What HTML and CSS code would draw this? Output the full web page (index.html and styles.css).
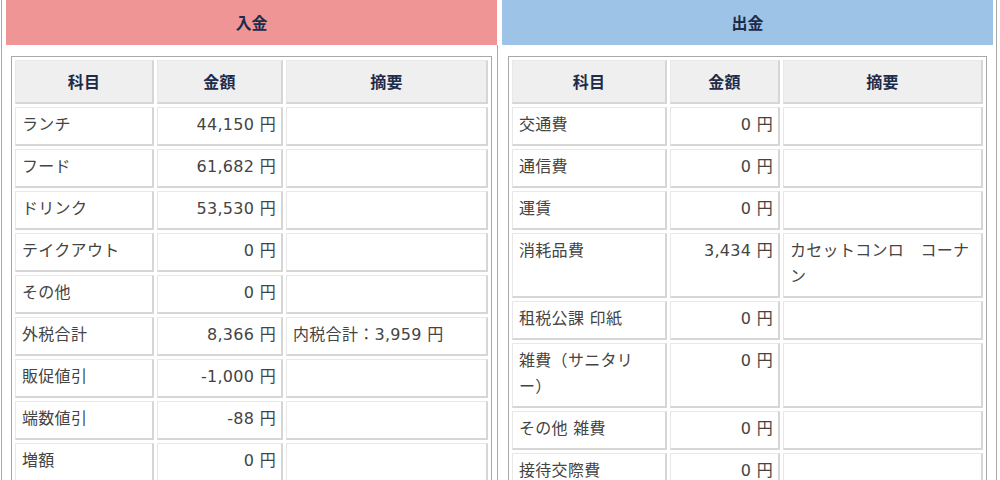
FILE: index.html
```html
<!DOCTYPE html>
<html lang="ja">
<head>
<meta charset="utf-8">
<title>入出金</title>
<link rel="stylesheet" href="styles.css">
</head>
<body>
<div class="page">
  <section class="col col-in">
    <h2 class="col-title title-in">入金</h2>
    <div class="col-body">
      <table class="ledger ledger-in">
        <colgroup><col class="c1"><col class="c2"><col class="c3"></colgroup>
        <thead>
          <tr><th>科目</th><th>金額</th><th>摘要</th></tr>
        </thead>
        <tbody>
          <tr><td>ランチ</td><td class="amt">44,150 円</td><td></td></tr>
          <tr><td>フード</td><td class="amt">61,682 円</td><td></td></tr>
          <tr><td>ドリンク</td><td class="amt">53,530 円</td><td></td></tr>
          <tr><td>テイクアウト</td><td class="amt">0 円</td><td></td></tr>
          <tr><td>その他</td><td class="amt">0 円</td><td></td></tr>
          <tr><td>外税合計</td><td class="amt">8,366 円</td><td>内税合計：3,959 円</td></tr>
          <tr><td>販促値引</td><td class="amt">-1,000 円</td><td></td></tr>
          <tr><td>端数値引</td><td class="amt">-88 円</td><td></td></tr>
          <tr><td>増額</td><td class="amt">0 円</td><td></td></tr>
        </tbody>
      </table>
    </div>
  </section>
  <section class="col col-out">
    <h2 class="col-title title-out">出金</h2>
    <div class="col-body">
      <table class="ledger ledger-out">
        <colgroup><col class="c1"><col class="c2"><col class="c3"></colgroup>
        <thead>
          <tr><th>科目</th><th>金額</th><th>摘要</th></tr>
        </thead>
        <tbody>
          <tr><td>交通費</td><td class="amt">0 円</td><td></td></tr>
          <tr><td>通信費</td><td class="amt">0 円</td><td></td></tr>
          <tr><td>運賃</td><td class="amt">0 円</td><td></td></tr>
          <tr><td>消耗品費</td><td class="amt">3,434 円</td><td>カセットコンロ　コーナン</td></tr>
          <tr><td>租税公課 印紙</td><td class="amt">0 円</td><td></td></tr>
          <tr><td>雑費（サニタリー）</td><td class="amt">0 円</td><td></td></tr>
          <tr><td>その他 雑費</td><td class="amt">0 円</td><td></td></tr>
          <tr><td>接待交際費</td><td class="amt">0 円</td><td></td></tr>
        </tbody>
      </table>
    </div>
  </section>
</div>
</body>
</html>
```
FILE: styles.css
```css
* { box-sizing: border-box; }

html, body {
  margin: 0;
  padding: 0;
  background: #ffffff;
}

body {
  font-family: "DejaVu Sans", "Noto Sans CJK JP", sans-serif;
  font-size: 16px;
  color: #444444;
}

.page {
  display: flex;
  margin-left: 1px;
  width: 996px;
  border-left: 1px solid #aaaaaa;
  border-right: 1px solid #aaaaaa;
}

.col {
  display: flex;
  flex-direction: column;
}

.col-in {
  width: 496px;
}

.col-out {
  width: 498px;
}

.col-title {
  margin: 0 0 0 4px;
  width: 491px;
  height: 45px;
  line-height: 45px;
  text-align: center;
  font-family: "Noto Sans CJK JP", sans-serif;
  font-size: 16px;
  font-weight: bold;
  color: #1e2b4a;
}

.title-in { background: #ef9595; }
.title-out { background: #9dc3e6; }

.col-body {
  flex: 1;
  padding-top: 11px;
}

.col-in .col-body {
  padding-left: 9px;
  border-right: 1px solid #aaaaaa;
}

.col-out .col-body {
  padding-left: 10px;
}

.ledger {
  border-collapse: separate;
  border-spacing: 3px;
  border: 1px solid #a8a8a8;
  table-layout: fixed;
}

.ledger-in { width: 481px; }
.ledger-in .c1 { width: 139px; }
.ledger-in .c2 { width: 126px; }
.ledger-in .c3 { width: 202px; }

.ledger-out { width: 479px; }
.ledger-out .c1 { width: 155px; }
.ledger-out .c2 { width: 110px; }
.ledger-out .c3 { width: 200px; }

.ledger th,
.ledger td {
  border-top: 1px solid #e8e8e8;
  border-left: 1px solid #e8e8e8;
  border-right: 2px solid #d6d6d6;
  border-bottom: 2px solid #d6d6d6;
  line-height: 26px;
  vertical-align: top;
  letter-spacing: 0.3px;
  text-spacing-trim: space-all;
}

.ledger th {
  background: #efefef;
  height: 44px;
  padding: 7px 6px 8px;
  text-align: center;
  font-family: "Noto Sans CJK JP", sans-serif;
  font-weight: bold;
  color: #1e2b4a;
}

.ledger td {
  padding: 4px 5px 6px 6px;
  text-align: left;
}

.ledger td.amt {
  text-align: right;
}
```
